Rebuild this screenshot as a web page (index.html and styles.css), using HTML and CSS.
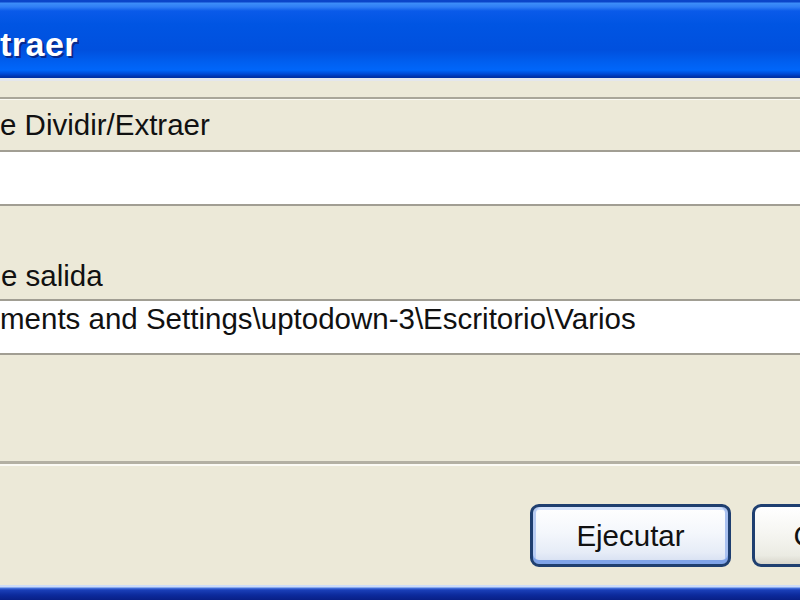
FILE: index.html
```html
<!DOCTYPE html>
<html lang="es">
<head>
<meta charset="utf-8">
<title>Dividir/Extraer</title>
<link rel="stylesheet" href="styles.css">
</head>
<body>
<div class="window">
  <div class="titlebar"><span class="title">traer</span></div>
  <div class="content">
    <div class="combo">e Dividir/Extraer</div>
    <div class="edit"></div>
    <div class="label">e salida</div>
    <div class="edit path">ments and Settings\uptodown-3\Escritorio\Varios</div>
    <div class="separator"></div>
    <div class="actions">
      <button class="btn default">Ejecutar</button>
      <button class="btn">Cancelar</button>
    </div>
  </div>
  <div class="frame-bottom"></div>
</div>
</body>
</html>
```
FILE: styles.css
```css
html, body {
  margin: 0;
  padding: 0;
}
body {
  width: 800px;
  height: 600px;
  overflow: hidden;
  background: #ece9d8;
  font-family: "Liberation Sans", Arial, sans-serif;
  font-size: 29.5px;
  color: #111;
}
.window {
  display: flex;
  flex-direction: column;
  height: 600px;
}
.titlebar {
  height: 78px;
  flex: none;
  display: flex;
  align-items: center;
  background: linear-gradient(to bottom,
    #0a45c9 0px, #0a45c9 2px,
    #3d8ef8 3px, #2f7ef5 7px,
    #0a5ae9 11px, #0055e3 24px,
    #0050de 50px, #005ff0 62px,
    #0066fa 70px, #0048d4 74px,
    #0030a6 77px, #0030a6 78px);
  border-bottom: 3px solid #e4e7ee;
}
.title {
  font-weight: bold;
  font-size: 34px;
  color: #fff;
  padding-left: 0;
  margin-top: 10px;
  text-shadow: 2px 2px 0 #0a2a8a;
  letter-spacing: 0.5px;
}
.content {
  flex: 1;
  display: flex;
  flex-direction: column;
  min-height: 0;
}
.combo {
  margin-top: 16px;
  border-top: 2px solid #a9a699;
  box-shadow: inset 0 1px 0 #faf9f2;
  padding: 8px 0 7px 0;
  line-height: 36px;
  height: 36px;
  white-space: nowrap;
}
.edit {
  background: #fff;
  border-top: 2px solid #a19e93;
  border-bottom: 2px solid #a19e93;
  height: 52px;
  line-height: 36px;
  white-space: nowrap;
}
.label {
  margin-top: 52px;
  line-height: 36px;
  height: 36px;
  margin-bottom: 5px;
  padding-left: 1px;
}
.path {
  padding-left: 0;
}
.separator {
  margin-top: 106px;
  height: 2px;
  border-top: 3px solid #b3b0a3;
  background: #fbfaf4;
}
.actions {
  margin-top: 38px;
  display: flex;
  justify-content: flex-end;
  gap: 21px;
  margin-right: -153px;
}
.btn {
  width: 201px;
  height: 63px;
  box-sizing: border-box;
  border: 3px solid #1f3f70;
  border-radius: 9px;
  background: linear-gradient(to bottom, #ffffff 0%, #f6f6f2 45%, #ebebe3 85%, #d8d6cc 100%);
  font-family: "Liberation Sans", Arial, sans-serif;
  font-size: 29.5px;
  color: #111;
  padding: 0;
}
.btn.default {
  background: linear-gradient(to bottom, #ffffff 0%, #f4f7fc 45%, #e6ecf7 80%, #d3ddf1 100%);
  box-shadow: inset 0 -4px 0 #7fa3e8, inset 3px 0 0 #b9cdf3, inset -3px 0 0 #a9c1f0, inset 0 3px 0 #d6e3fb;
}
.frame-bottom {
  height: 15px;
  flex: none;
  background: linear-gradient(to bottom,
    #ccdcf8 0px, #ccdcf8 2px,
    #4a78e0 3px, #1a3fb8 5px,
    #0c2a9c 10px, #081f86 15px);
}
```
